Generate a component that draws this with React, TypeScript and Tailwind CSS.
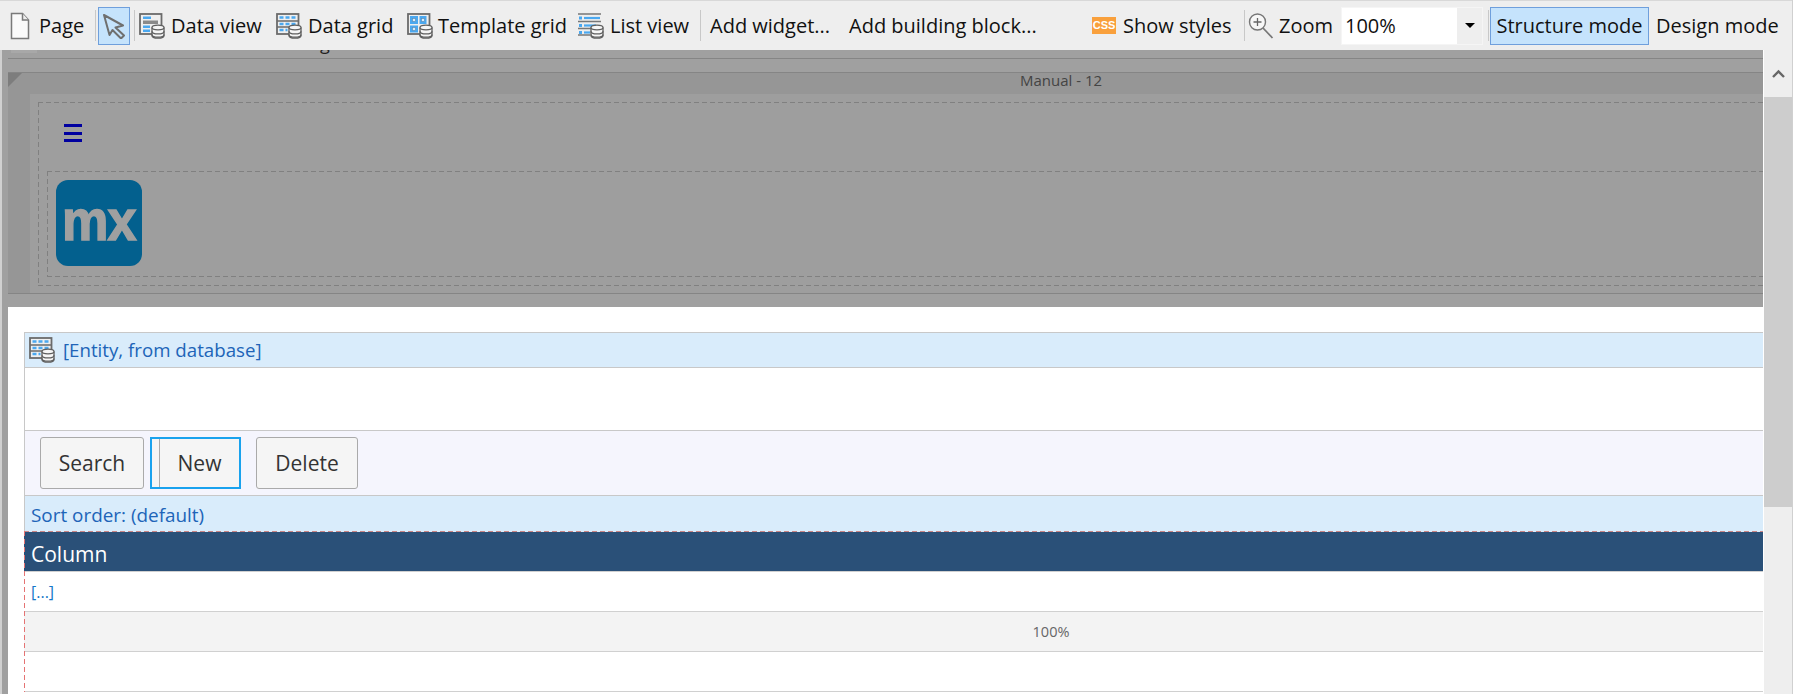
const font = { fontFamily: '"Open Sans", "Noto Sans", sans-serif' };

const dashedBox =
  "[background:repeating-linear-gradient(to_right,#808080_0_5px,transparent_5px_8px)_top/100%_1px_no-repeat,repeating-linear-gradient(to_right,#808080_0_5px,transparent_5px_8px)_bottom/100%_1px_no-repeat,repeating-linear-gradient(to_bottom,#808080_0_5px,transparent_5px_8px)_left/1px_100%_no-repeat]";

function Db() {
  return (
    <g fill="#f6f6f6" stroke="#5f5f5f" strokeWidth="1.3">
      <path d="M13 14.500v8c0 1.500 2.700 2.700 6 2.700s6-1.200 6-2.700v-8" />
      <ellipse cx="19" cy="14.500" rx="6" ry="2.300" />
      <path d="M13 18.200c0 1.500 2.700 2.700 6 2.700s6-1.200 6-2.700M13 21.500c0 1.500 2.700 2.700 6 2.700s6-1.200 6-2.700" fill="none" />
    </g>
  );
}

function Frame() {
  return <rect x="1" y="1" width="21.500" height="20" fill="#efefef" stroke="#6b6b6b" strokeWidth="1.800" />;
}

function PageIcon() {
  return (
    <svg width="20" height="28" viewBox="0 0 20 28" fill="none" className="shrink-0">
      <path d="M1.500 1.500h11l6 6.500v18.500h-17z" stroke="#7a7a7a" strokeWidth="1.500" fill="#fafafa" />
      <path d="M12.500 1.500v6.500h6" stroke="#7a7a7a" strokeWidth="1.500" fill="#eee" />
    </svg>
  );
}

function ArrowIcon() {
  return (
    <svg width="25" height="26" viewBox="0 0 25 26" fill="none">
      <path d="M2 2l19 10.500-7.500 2 8.500 8-3 3-8.500-8.500L7.500 22z" stroke="#6f6f6f" strokeWidth="2" strokeLinejoin="round" fill="#c5e3fc" />
    </svg>
  );
}

function DataViewIcon() {
  return (
    <svg width="26" height="26" viewBox="0 0 26 26" className="shrink-0">
      <Frame />
      <rect x="4" y="3.500" width="8" height="2.500" fill="#4aa8f0" />
      <rect x="4" y="7.500" width="15" height="3.500" fill="#8a8a8a" />
      <rect x="4" y="12.500" width="7" height="2.500" fill="#4aa8f0" />
      <rect x="4" y="16.500" width="7" height="2.500" fill="#4aa8f0" />
      <Db />
    </svg>
  );
}

function DataGridIcon() {
  return (
    <svg width="26" height="26" viewBox="0 0 26 26" className="shrink-0">
      <Frame />
      <path d="M3.500 4.500h16M3.500 11h16M3.500 17h8" stroke="#4aa8f0" strokeWidth="2.500" strokeDasharray="4 2" />
      <path d="M1 8h21M1 14h21" stroke="#6b6b6b" strokeWidth="1.500" />
      <Db />
    </svg>
  );
}

function TemplateGridIcon() {
  return (
    <svg width="26" height="26" viewBox="0 0 26 26" className="shrink-0">
      <Frame />
      <rect x="3" y="3" width="8" height="8" fill="#4aa8f0" />
      <rect x="12.500" y="3" width="7" height="8" fill="#4aa8f0" />
      <rect x="3" y="12.500" width="8" height="7" fill="#4aa8f0" />
      <rect x="5.500" y="5.500" width="3" height="3" fill="#d8edfc" stroke="#5f8fb8" strokeWidth="0.700" />
      <rect x="14.500" y="5.500" width="3" height="3" fill="#d8edfc" stroke="#5f8fb8" strokeWidth="0.700" />
      <rect x="5.500" y="14.500" width="3" height="3" fill="#d8edfc" stroke="#5f8fb8" strokeWidth="0.700" />
      <Db />
    </svg>
  );
}

function ListViewIcon() {
  return (
    <svg width="26" height="26" viewBox="0 0 26 26" className="shrink-0">
      <path d="M0 1h23M0 8.500h23M0 15.500h13M0 22h12" stroke="#777" strokeWidth="1.600" />
      <rect x="1" y="3.500" width="3" height="3" fill="#4aa8f0" />
      <path d="M6 5h16" stroke="#4aa8f0" strokeWidth="2.200" />
      <rect x="1" y="11" width="3" height="3" fill="#4aa8f0" />
      <path d="M6 12.500h12" stroke="#4aa8f0" strokeWidth="2.200" />
      <rect x="1" y="18" width="3" height="3" fill="#4aa8f0" />
      <path d="M6 19.500h6" stroke="#4aa8f0" strokeWidth="2.200" />
      <Db />
    </svg>
  );
}

function ZoomIcon() {
  return (
    <svg width="26" height="28" viewBox="0 0 26 28" fill="none" className="shrink-0">
      <circle cx="9.500" cy="10" r="8" stroke="#777" strokeWidth="1.400" fill="#f7f7f7" />
      <path d="M5.500 10h8M9.500 6v8" stroke="#666" strokeWidth="1.300" />
      <path d="M15 16l9.500 10" stroke="#777" strokeWidth="1.800" />
    </svg>
  );
}

function Sep({ className }: { className?: string }) {
  return <div className={`w-px h-[31px] bg-[#c8c8c8] shrink-0 ${className ?? ""}`} />;
}

function Tool({ icon, label, className }: { icon?: React.ReactNode; label: string; className: string }) {
  return (
    <div className={`flex items-center shrink-0 whitespace-nowrap ${className}`}>
      {icon}
      <span>{label}</span>
    </div>
  );
}

function Toolbar() {
  return (
    <div className="h-[50px] shrink-0 bg-[#eeeeee] border-t border-[#d8d8d8] flex items-center text-[20px] text-[#111] pl-[10px]">
      <Tool icon={<PageIcon />} label="Page" className="gap-[9px] w-[85px]" />
      <Sep />
      <div className="ml-[2px] w-[32px] h-[38px] bg-[#c5e3fc] border border-[#6f9fdc] flex items-center justify-center shrink-0">
        <ArrowIcon />
      </div>
      <Sep className="ml-[4px]" />
      <Tool icon={<DataViewIcon />} label="Data view" className="gap-[6px] ml-[4px] w-[137px]" />
      <Tool icon={<DataGridIcon />} label="Data grid" className="gap-[6px] w-[131px]" />
      <Tool icon={<TemplateGridIcon />} label="Template grid" className="gap-[5px] w-[171px]" />
      <Tool icon={<ListViewIcon />} label="List view" className="gap-[6px] w-[122px]" />
      <Sep />
      <Tool label="Add widget..." className="ml-[9px] w-[139px]" />
      <Tool label="Add building block..." className="w-[243px]" />
      <div className="w-[24px] h-[17px] bg-[#f9a03c] text-white text-[11px] font-bold flex items-center justify-center shrink-0 [font-family:'Liberation_Sans',sans-serif]">CSS</div>
      <Tool label="Show styles" className="ml-[7px] w-[121px]" />
      <Sep />
      <Tool icon={<ZoomIcon />} label="Zoom" className="gap-[5px] ml-[3px] w-[93px]" />
      <div className="w-[142px] h-[38px] bg-white flex items-center justify-between shrink-0 border border-[#f5f5f5]">
        <span className="pl-[3px]">100%</span>
        <div className="w-[25px] h-full bg-[#eeeeee] flex items-center justify-center">
          <div className="w-0 h-0 border-l-[5px] border-r-[5px] border-t-[5px] border-l-transparent border-r-transparent border-t-black" />
        </div>
      </div>
      <Sep className="ml-[5px]" />
      <div className="ml-px w-[159px] h-[38px] bg-[#c5e3fc] border border-[#6f9fdc] flex items-center justify-center shrink-0 whitespace-nowrap">Structure mode</div>
      <Tool label="Design mode" className="ml-[7px]" />
    </div>
  );
}

function Scrollbar() {
  return (
    <div className="w-[28px] shrink-0 ml-px bg-[#eeeeee] flex flex-col">
      <div className="h-[47px] flex items-center justify-center pb-[1px]">
        <svg width="13" height="9" viewBox="0 0 13 9" fill="none">
          <path d="M1 8l5.500-5.500L12 8" stroke="#666" strokeWidth="2.400" />
        </svg>
      </div>
      <div className="h-[410px] bg-[#cdcdcd]" />
    </div>
  );
}

function Btn({ label, className }: { label: string; className: string }) {
  return (
    <div className={`h-[52px] pt-[1px] flex items-center justify-center bg-[#f5f5f5] text-[#333] border border-[#aaa] rounded-[3px] shrink-0 ${className}`}>
      {label}
    </div>
  );
}

function Overlay() {
  return (
    <div className="h-[257px] bg-[#a0a0a0] pl-[6px] flex flex-col shrink-0 overflow-hidden">
      <div className="h-[9px] border-b border-[#858585] mb-[13px] relative overflow-hidden shrink-0">
        <div className="absolute left-[3px] top-0 w-[26px] h-[3px] bg-[#a8a8a8]" />
        <span className="absolute left-[312px] -top-[20px] text-[18px] text-[#222]">g</span>
      </div>
      <div className="h-[222px] w-[2106px] shrink-0 border-t border-b border-[#858585] bg-[#969696] flex flex-col">
        <div className="h-[21px] text-center text-[15px] leading-[15px] text-[#444] relative shrink-0">
          <div className="absolute left-0 top-0 w-0 h-0 border-t-[14px] border-r-[14px] border-t-[#7d7d7d] border-r-transparent" />
          <span>Manual - 12</span>
        </div>
        <div className="flex-1 ml-[22px] bg-[#9e9e9e] pt-[8px] pl-[8px] pb-[7px] min-h-0 flex flex-col">
          <div className={`flex-1 min-h-0 flex flex-col pl-[9px] pb-[9px] ${dashedBox}`}>
            <div className="h-[69px] pl-[17px] pt-[22px] shrink-0">
              <div className="w-[18px] h-[18px] flex flex-col justify-between">
                <div className="h-[3px] bg-[#0000a0]" />
                <div className="h-[3px] bg-[#0000a0]" />
                <div className="h-[3px] bg-[#0000a0]" />
              </div>
            </div>
            <div className={`flex-1 pt-[9px] pl-[9px] min-h-0 ${dashedBox}`}>
              <div className="w-[86px] h-[86px] rounded-[12px] bg-[#03608e] flex items-center justify-center overflow-hidden">
                <span className="text-[#a0a0a0] font-bold text-[58px] leading-none tracking-[-1px] -mt-[7px] scale-x-[0.9] [-webkit-text-stroke:1.5px_#a0a0a0] [font-family:'Liberation_Sans',sans-serif]">mx</span>
              </div>
            </div>
          </div>
        </div>
      </div>
    </div>
  );
}

function Grid() {
  return (
    <div className="ml-[16px] w-[2054px] flex flex-col">
      <div className="h-[36px] bg-[#d9ecfb] border-t border-b border-l border-[#c8c8c8] flex items-center pl-[4px] text-[18.700px] gap-[8px]">
        <DataGridIcon />
        <span className="text-[#2064b8] pt-[1px]">[Entity, from database]</span>
      </div>
      <div className="h-[62px] bg-white border-l border-[#c8c8c8]" />
      <div className="h-[66px] bg-[#f5f5fd] border-t border-b border-l border-[#c8c8c8] flex items-center pl-[15px] text-[21px]">
        <Btn label="Search" className="w-[104px]" />
        <div className="relative ml-[6px] w-[91px] h-[52px] pt-[1px] bg-[#f5f5f5] text-[#333] border-2 border-[#19a2ee] flex items-center justify-center shrink-0">
          <div className="absolute left-[7px] top-0 bottom-0 w-px bg-[#aaa]" />
          <span className="pl-[8px]">New</span>
        </div>
        <Btn label="Delete" className="ml-[15px] w-[102px]" />
      </div>
      <div className="h-[35px] bg-[#d9ecfb] flex items-center pl-[6px] pt-[3px] text-[18.900px] border-l border-[#c8c8c8] text-[#2064b8]">Sort order: (default)</div>
      <div className="relative flex flex-col">
        <div className="absolute left-0 top-0 bottom-0 w-px z-10 bg-[repeating-linear-gradient(to_bottom,#e57373_0_5px,transparent_5px_8px)]" />
        <div className="h-[1px] bg-[repeating-linear-gradient(to_right,#c98585_0_5px,#d9ecfb_5px_8px)]" />
        <div className="h-[39px] bg-[#2a5078] flex items-center pl-[7px] pt-[6px] text-[21px] text-white">Column</div>
        <div className="h-[41px] bg-white border-t border-b border-[#d0d0d0] flex items-center pl-[7px] text-[16px] text-[#1577c9]">[...]</div>
        <div className="h-[40px] bg-[#f3f3f3] border-b border-[#d0d0d0] flex items-center justify-center text-[14.500px] text-[#666]">100%</div>
        <div className="h-[40px] bg-white border-b border-[#d0d0d0]" />
      </div>
    </div>
  );
}

export default function App() {
  return (
    <div className="w-[1793px] h-[694px] overflow-hidden flex flex-col bg-[#eeeeee] border-r border-[#d0d0d0]" style={font}>
      <Toolbar />
      <div className="flex-1 flex min-h-0 border-l-2 border-[#d0d0d0] bg-white">
        <div className="flex-1 min-w-0 flex flex-col bg-white overflow-hidden">
          <Overlay />
          <div className="flex-1 flex min-h-0">
            <div className="w-[6px] bg-[#a0a0a0] shrink-0" />
            <div className="flex-1 pt-[25px] min-w-0">
              <Grid />
            </div>
          </div>
        </div>
        <Scrollbar />
      </div>
    </div>
  );
}
